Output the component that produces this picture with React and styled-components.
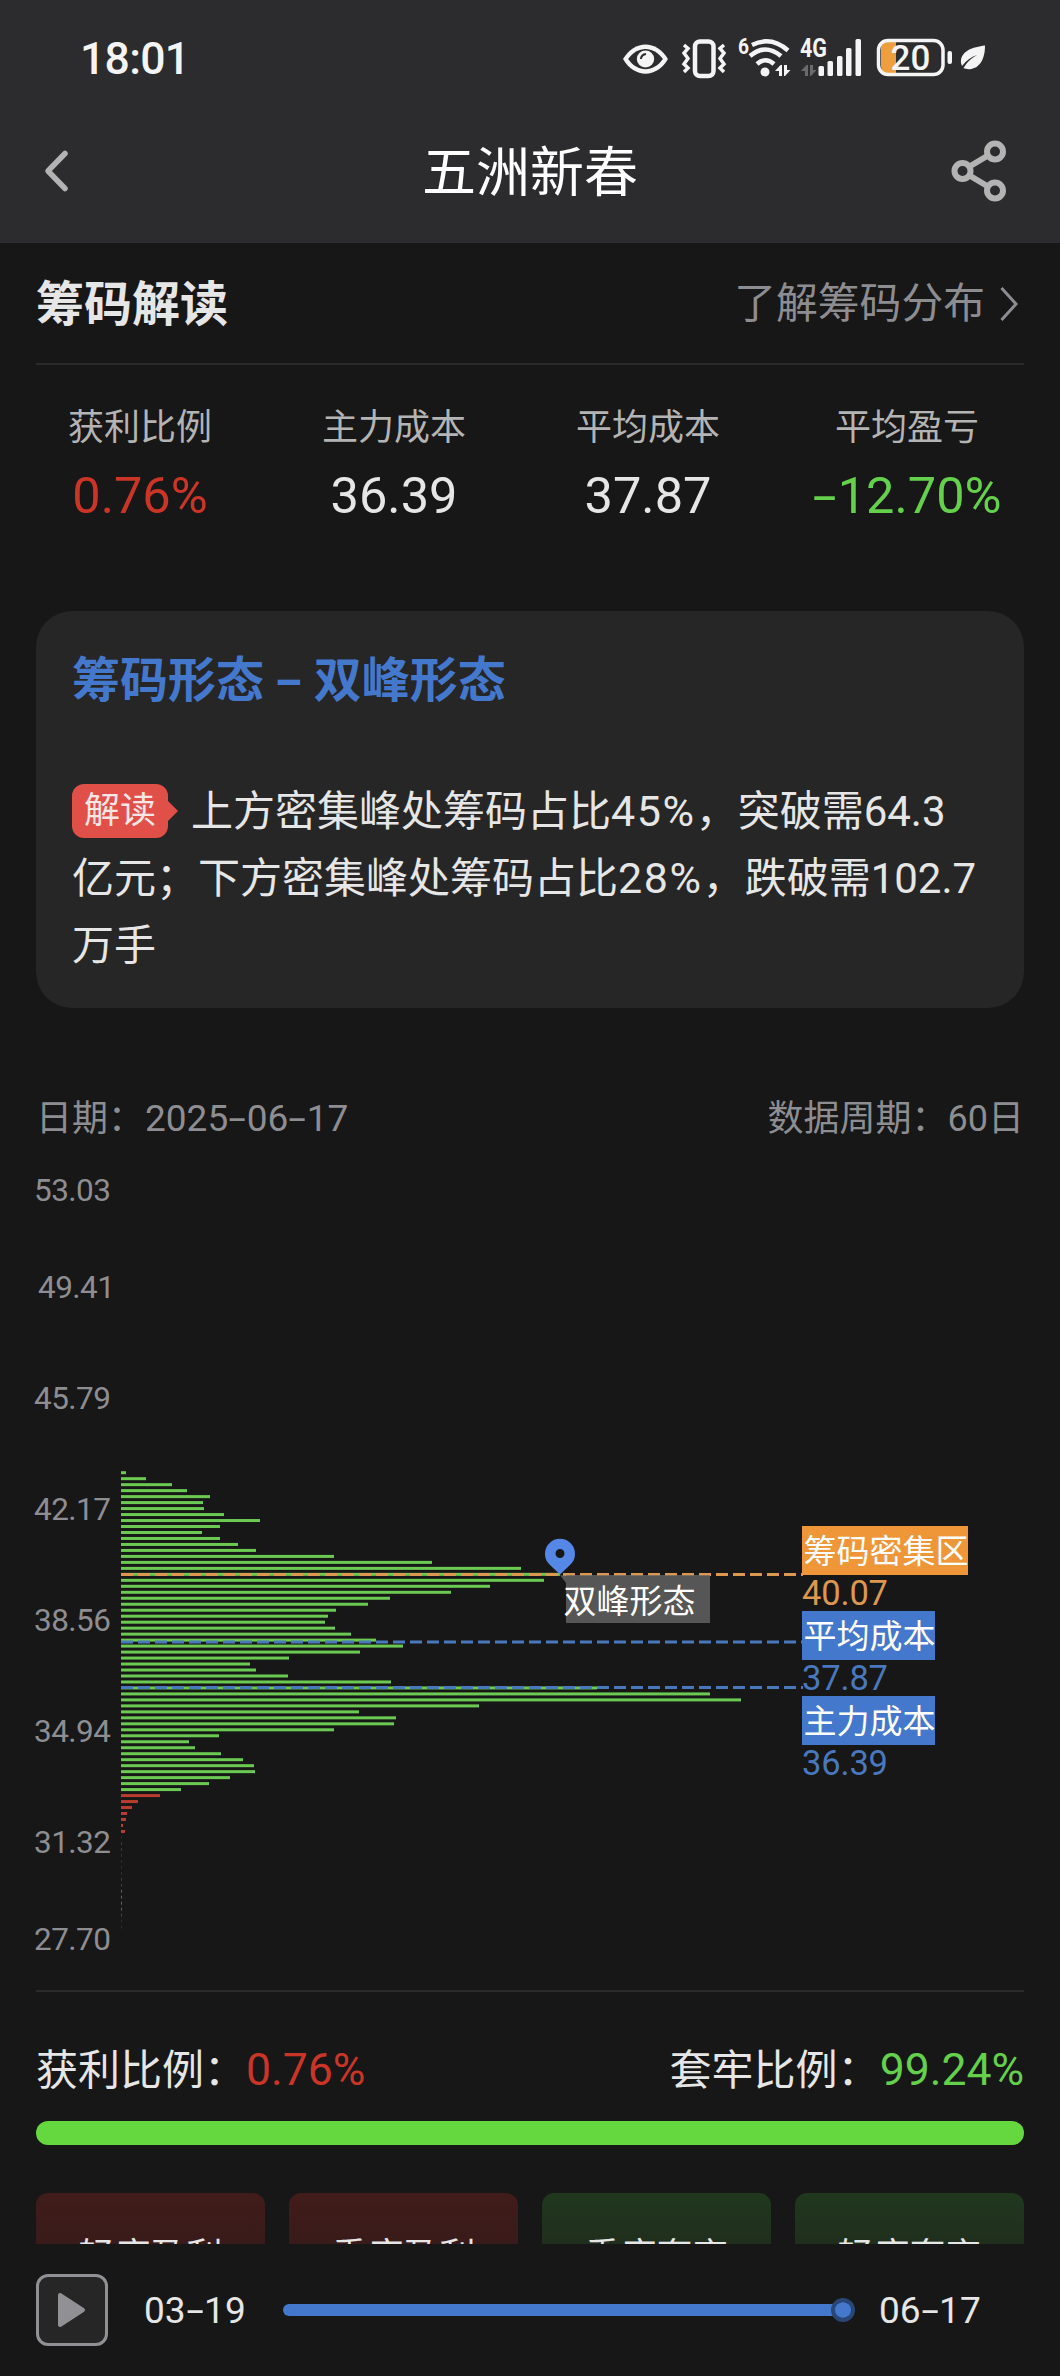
import React from 'react';
import styled, { createGlobalStyle } from 'styled-components';

const GlobalStyle = createGlobalStyle`
  body {
    margin: 0;
    background: #171717;
    font-family: Roboto, 'Noto Sans CJK SC', sans-serif;
  }
`;

// Page shell
const Screen = styled.div`
  display: flex;
  flex-direction: column;
  width: 1060px;
  height: 2376px;
  overflow: hidden;
  background: #171717;
  color: #e6e6e6;
`;

const Header = styled.header`
  height: 243px;
  flex: none;
  background: #2c2c2e;
`;

const StatusBar = styled.div`
  display: flex;
  align-items: center;
  justify-content: space-between;
  height: 116px;
  padding: 0 74px 0 80px;
  color: #f4f4f4;
`;

const Clock = styled.span`
  padding-top: 1px;
  font-size: 44.5px;
  font-weight: 500;
  letter-spacing: -0.7px;
  line-height: 52px;
`;

const StatusIcons = styled.div`
  display: flex;
  align-items: center;
`;

const StatusIcon = styled.svg`
  display: block;
  overflow: visible;
  width: ${(props) => props.$width}px;
  height: 44px;
  margin-left: ${(props) => props.$gap || 0}px;
  font-weight: 700;
`;

const NavBar = styled.div`
  display: flex;
  align-items: center;
  justify-content: space-between;
  height: 110px;
  padding: 0 50px 0 40px;
`;

const NavSide = styled.div`
  display: flex;
  width: 100px;
  justify-content: ${(props) => (props.$end ? 'flex-end' : 'flex-start')};
`;

const NavTitle = styled.h1`
  margin: 0 0 0 10px;
  padding-top: 5px;
  color: #fff;
  font-size: 54px;
  font-weight: 400;
  line-height: 64px;
`;

const Body = styled.main`
  display: flex;
  flex-direction: column;
  height: 2001px;
  flex: none;
  padding: 0 36px;
  overflow: hidden;
`;

// Section heading
const SectionHead = styled.div`
  display: flex;
  flex: none;
  align-items: center;
  justify-content: space-between;
  box-sizing: border-box;
  height: 122px;
  padding-top: 2px;
  border-bottom: 2px solid #2b2b2d;
`;

const SectionTitle = styled.h2`
  margin: 0;
  padding-top: 1px;
  font-size: 48px;
  font-weight: 700;
  line-height: 60px;
`;

const MoreLink = styled.a`
  display: flex;
  align-items: center;
  gap: 15px;
  padding-right: 6px;
  color: #8d8c91;
  font-size: 41.8px;
  line-height: 50px;
`;

// Key figures
const Stats = styled.div`
  display: grid;
  flex: none;
  grid-template-columns: 254px 254px 254px 264px;
  height: 246px;
  margin: 0 -15px 0 -23px;
  box-sizing: border-box;
  padding-top: 36px;
`;

const Stat = styled.div`
  display: flex;
  flex-direction: column;
  align-items: center;
`;

const StatLabel = styled.span`
  color: #b4b4b4;
  font-size: 36px;
  line-height: 54px;
`;

const StatValue = styled.span`
  margin-top: 11px;
  color: ${(props) => props.$color || '#e6e6e6'};
  font-size: 50.5px;
  line-height: 60px;
`;

const DashBox = styled.span`
  display: inline-block;
  width: 0.5em;
  text-align: center;
  transform: scaleX(1.7);
`;

// Interpretation card
const Card = styled.section`
  flex: none;
  box-sizing: border-box;
  height: 397px;
  padding: 40px 36px 0;
  border-radius: 36px;
  background: #262626;
`;

const CardTitle = styled.h3`
  margin: 0;
  color: #4478cc;
  font-size: 48px;
  font-weight: 700;
  line-height: 60px;
  word-spacing: 1px;
`;

const CardText = styled.p`
  margin: 67px -20px 0 0;
  font-size: 42px;
  line-height: 67px;
  white-space: nowrap;
`;

const Percent = styled.span`
  font-size: 43px;
  letter-spacing: 1.6px;
`;

const Badge = styled.span`
  position: relative;
  display: inline-block;
  width: 96px;
  height: 54px;
  margin-right: 23px;
  border-radius: 12px;
  background: #e05049;
  color: #fbe6e4;
  font-size: 36px;
  line-height: 54px;
  text-align: center;
  vertical-align: 3px;

  &::after {
    content: '';
    position: absolute;
    left: 95px;
    top: 16px;
    border: 11px solid transparent;
    border-left-color: #e05049;
    border-right-width: 0;
  }
`;

// Chart area
const MetaRow = styled.div`
  display: flex;
  flex: none;
  justify-content: space-between;
  margin-top: 86px;
  margin-bottom: -1px;
  color: #8e8d92;
  font-size: 36px;
  line-height: 50px;
`;

const MetaDate = styled.span`
  font-size: 37px;
  margin-left: 1px;
`;

const ChartSvg = styled.svg`
  display: block;
  flex: none;
  width: 1060px;
  height: 847px;
  margin-left: -36px;
`;

const Divider = styled.div`
  flex: none;
  height: 2px;
  background: #2b2b2d;
`;

// Profit / trapped ratio
const RatioRow = styled.div`
  display: flex;
  flex: none;
  justify-content: space-between;
  height: 54px;
  margin-top: 51px;
  font-size: 42px;
  line-height: 54px;
`;

const RatioValue = styled.span`
  color: ${(props) => props.$color};
  font-size: 44.5px;
`;

const RatioBar = styled.div`
  flex: none;
  height: 24px;
  margin-top: 24px;
  border-radius: 12px;
  background: #64d83e;
`;

const Tiles = styled.div`
  display: grid;
  flex: none;
  grid-template-columns: repeat(4, 1fr);
  gap: 24px;
  margin-top: 48px;
`;

const Tile = styled.div`
  height: 130px;
  box-sizing: border-box;
  padding-top: 37px;
  border-radius: 12px;
  background: linear-gradient(${(props) => (props.$up ? '#411c1a, #331a1a 80px' : '#20381e, #20291d 80px')});
  font-size: 36px;
  line-height: 54px;
  text-align: center;
`;

// Timeline player
const Player = styled.footer`
  display: flex;
  flex: none;
  align-items: center;
  height: 132px;
  padding: 0 36px;
  font-size: 37px;
  line-height: 50px;
`;

const PlayButton = styled.button`
  display: flex;
  align-items: center;
  justify-content: center;
  box-sizing: border-box;
  width: 72px;
  height: 72px;
  margin: 0 36px 0 0;
  padding: 0;
  border: 3px solid #919095;
  border-radius: 12px;
  background: #262626;
`;

const PlayerDate = styled.span`
  width: 102px;
  padding-top: 2px;
`;

const Track = styled.div`
  position: relative;
  width: 570px;
  height: 12px;
  margin: 0 26px 0 37px;
  border-radius: 6px;
  background: #4478cc;
`;

const Thumb = styled.div`
  position: absolute;
  right: -2px;
  top: -6px;
  box-sizing: border-box;
  width: 24px;
  height: 24px;
  border: 4px solid #294776;
  border-radius: 50%;
  background: #4478cc;
  background-clip: padding-box;
`;

const RED = '#cb3527';
const GREEN = '#65d04b';

const stats = [
    { label: '获利比例', value: '0.76%', color: RED },
    { label: '主力成本', value: '36.39' },
    { label: '平均成本', value: '37.87' },
    { label: '平均盈亏', value: '-12.70%', color: GREEN },
];

const tiles = [
    { label: '轻度盈利', up: true },
    { label: '重度盈利', up: true },
    { label: '重度套牢', up: false },
    { label: '轻度套牢', up: false },
];

// Chip volume per price level, from the highest price down
const trapped = [
    5, 25, 51, 66, 89, 82, 83, 103, 139, 99, 81, 99, 117, 135, 213, 311, 400, 439, 423, 369, 330, 269, 247, 215, 207,
    204, 214, 230, 255, 282, 239, 168, 129, 135, 167, 270, 476, 589, 620, 358, 238, 275, 273, 213, 98, 68, 74, 100,
    122, 133, 134, 109, 88, 60,
];
const profitable = [
    39, 17, 11, 6, 5, 2, 4, 0.2, 0.5, 0.5, 0.3, 0.3, 0.3, 0.3, 0.5, 0.5, 1, 1, 1, 1, 0.6, 0.3, 0.3,
];

const axis = [
    { label: '53.03', x: 35, y: 58 },
    { label: '49.41', x: 39, y: 155 },
    { label: '45.79', x: 35, y: 266 },
    { label: '42.17', x: 35, y: 377 },
    { label: '38.56', x: 35, y: 488 },
    { label: '34.94', x: 35, y: 599 },
    { label: '31.32', x: 35, y: 710 },
    { label: '27.70', x: 35, y: 807 },
];

const marks = [
    { label: '筹码密集区', value: '40.07', line: 431.5, top: 383, width: 166, fill: '#ee9638', color: '#dc9850' },
    { label: '平均成本', value: '37.87', line: 499, top: 468, width: 133, fill: '#4478cc', color: '#4a78bd' },
    { label: '主力成本', value: '36.39', line: 544.5, top: 553, width: 133, fill: '#4478cc', color: '#4a78bd' },
];

// Draws hyphens at the same width as the figures around them
const Figures = ({ text }) =>
    text.split(/(-)/).map((part, index) => (part === '-' ? <DashBox key={index}>-</DashBox> : part));

const UpDown = ({ x, fill = '#f4f4f4' }) => (
    <path transform={`translate(${x} 29)`} d="M0 6 L5.5 0 H7 V11 H4 V6 Z M9 0 H12 V5 H15.5 L10 11 H9 Z" fill={fill} />
);

const StatusGlyphs = () => (
    <StatusIcons>
        <StatusIcon $width={47} viewBox="0 0 46 44" preserveAspectRatio="none">
            <path d="M1 23 C12 3.5 34 3.5 45 23 C34 42.500 12 42.500 1 23 Z" fill="#f4f4f4" />
            <path d="M6 23 C15 9.500 31 9.500 40 23 C31 36.500 15 36.500 6 23 Z" fill="#2c2c2e" />
            <circle cx="23" cy="23" r="8.500" fill="#f4f4f4" />
            <path d="M18.500 23 Q19 18.500 23.500 18" stroke="#2c2c2e" strokeWidth="2" fill="none" />
        </StatusIcon>
        <StatusIcon $width={46} $gap={12} viewBox="0 0 46 44" fill="none" stroke="#f4f4f4">
            <rect x="14" y="5.500" width="18.500" height="34.500" rx="5" strokeWidth="4.500" />
            <path d="M3 9 L7 12.500 L3 17 L7 22.500 L3 28 L7 32 L3 36" strokeWidth="3.500" />
            <path d="M43 9 L39 12.500 L43 17 L39 22.500 L43 28 L39 32 L43 36" strokeWidth="3.500" />
        </StatusIcon>
        <StatusIcon $width={54} $gap={11} viewBox="0 0 54 44">
            <text x="0" y="18" fontSize="22" textLength="11" lengthAdjust="spacingAndGlyphs" fill="#f4f4f4">6</text>
            <g fill="none" stroke="#f4f4f4" strokeWidth="4.500">
                <path d="M14 9 Q33 -0.500 50 14.500" />
                <path d="M12 20 Q27 7 43 20" />
                <path d="M19 28 Q27.500 20.500 36 28" />
            </g>
            <circle cx="27" cy="36" r="4.500" fill="#f4f4f4" />
            <UpDown x={37} />
        </StatusIcon>
        <StatusIcon $width={62} $gap={8} viewBox="0 0 62 44" fill="#f4f4f4">
            <text x="0" y="21" fontSize="25" textLength="27" lengthAdjust="spacingAndGlyphs">4G</text>
            <UpDown x={1} fill="#6a6a6c" />
            <rect x="18.500" y="30" width="5.500" height="10" rx="1.500" />
            <rect x="27.500" y="25" width="5.500" height="15" rx="1.500" />
            <rect x="37" y="20" width="5.500" height="20" rx="1.500" />
            <rect x="46" y="12" width="5.500" height="28" rx="1.500" />
            <rect x="55.500" y="3" width="5.500" height="37" rx="1.500" />
        </StatusIcon>
        <StatusIcon $width={76} $gap={15} viewBox="0 0 76 44">
            <path d="M12 5 H19 V38 H12 Q4 38 4 30 V13 Q4 5 12 5 Z" fill="#ee9f3d" />
            <rect x="1.500" y="4.500" width="64.500" height="34" rx="9.500" fill="none" stroke="#f4f4f4" strokeWidth="3.500" />
            <text x="13.500" y="34" fontSize="35" fontWeight="500" textLength="40" fill="#f4f4f4">20</text>
            <rect x="70.500" y="15" width="4.500" height="13" rx="2" fill="#f4f4f4" />
        </StatusIcon>
        <StatusIcon $width={26} $gap={7} viewBox="0 0 26 44">
            <path d="M25 9.500 C13 11 0 15 1 27 L2 30 Q8 22 17 19 Q8 24 3.500 32 C9 35 25 34 25 9.500 Z" fill="#f4f4f4" />
        </StatusIcon>
    </StatusIcons>
);

const ChipChart = () => (
    <ChartSvg viewBox="0 0 1060 847">
        {axis.map((tick) => (
            <text key={tick.label} x={tick.x - 1} y={tick.y} fontSize="31.500" textLength="77" fill="#8e8d92">
                {tick.label}
            </text>
        ))}
        {[...trapped, ...profitable].map((width, index) => (
            <rect
                key={index}
                x="121"
                y={328.2 + index * 5.979}
                width={width}
                height="3"
                fill={index < trapped.length ? '#6cca52' : '#b83c30'}
            />
        ))}
        {marks.map((mark) => (
            <line
                key={mark.label}
                x1="121"
                x2="803"
                y1={mark.line}
                y2={mark.line}
                stroke={mark.color}
                strokeWidth="3"
                strokeDasharray="12 5"
            />
        ))}
        <path d="M560 432 L566 433 V440 Z" fill="#585858" />
        <rect x="566" y="432" width="144" height="48" fill="#666" fillOpacity="0.8" />
        <text x="563.500" y="470" fontSize="33" textLength="132" fill="#fff">双峰形态</text>
        <path
            fillRule="evenodd"
            d="M560 431.500 L549.500 421.500 A15 15 0 1 1 570.500 421.500 Z M564.500 410.500 A4.500 4.500 0 1 0 555.500 410.500 A4.500 4.500 0 1 0 564.500 410.500 Z"
            fill="#5588e6"
        />
        {marks.map((mark) => (
            <g key={mark.label}>
                <rect x="802" y={mark.top} width={mark.width} height="49" fill={mark.fill} />
                <text x="803.500" y={mark.top + 37} fontSize="33" fill="#fff">{mark.label}</text>
                <text x="802" y={mark.top + 78.5} fontSize="34.500" textLength="86" fill={mark.color}>{mark.value}</text>
            </g>
        ))}
    </ChartSvg>
);

const App = () => (
    <Screen>
        <GlobalStyle />
        <Header>
            <StatusBar>
                <Clock>18:01</Clock>
                <StatusGlyphs />
            </StatusBar>
            <NavBar>
                <NavSide>
                    <svg width="32" height="48" viewBox="0 0 32 48" fill="none" stroke="#b3b3b3" strokeWidth="5.500" strokeLinecap="round" strokeLinejoin="round">
                        <path d="M25 6.500 L8 24 L25 41.500" />
                    </svg>
                </NavSide>
                <NavTitle>五洲新春</NavTitle>
                <NavSide $end>
                    <svg width="62" height="64" viewBox="0 0 62 64" fill="none" stroke="#b3b3b3" strokeWidth="6">
                        <circle cx="47" cy="12.500" r="8" />
                        <circle cx="14.500" cy="32" r="8" />
                        <circle cx="47" cy="51.500" r="8" />
                        <path d="M21.500 27.500 L40 16.500 M21.500 36.500 L40 47.500" />
                    </svg>
                </NavSide>
            </NavBar>
        </Header>

        <Body>
            <SectionHead>
                <SectionTitle>筹码解读</SectionTitle>
                <MoreLink>
                    了解筹码分布
                    <svg width="18" height="36" viewBox="0 0 18 36" fill="none" stroke="#8d8c91" strokeWidth="3">
                        <path d="M1.500 2 L16 18 L1.500 34" />
                    </svg>
                </MoreLink>
            </SectionHead>

            <Stats>
                {stats.map((stat) => (
                    <Stat key={stat.label}>
                        <StatLabel>{stat.label}</StatLabel>
                        <StatValue $color={stat.color}>
                            <Figures text={stat.value} />
                        </StatValue>
                    </Stat>
                ))}
            </Stats>

            <Card>
                <CardTitle>
                    筹码形态 <Figures text="-" /> 双峰形态
                </CardTitle>
                <CardText>
                    <Badge>解读</Badge>上方密集峰处筹码占比<Percent>45%</Percent>，突破需64.3
                    <br />
                    亿元；下方密集峰处筹码占比<Percent>28%</Percent>，跌破需102.7
                    <br />
                    万手
                </CardText>
            </Card>

            <MetaRow>
                <span>
                    日期：
                    <MetaDate>
                        <Figures text="2025-06-17" />
                    </MetaDate>
                </span>
                <span>数据周期：60日</span>
            </MetaRow>
            <ChipChart />
            <Divider />

            <RatioRow>
                <span>
                    获利比例：<RatioValue $color={RED}>0.76%</RatioValue>
                </span>
                <span>
                    套牢比例：<RatioValue $color={GREEN}>99.24%</RatioValue>
                </span>
            </RatioRow>
            <RatioBar />
            <Tiles>
                {tiles.map((tile) => (
                    <Tile key={tile.label} $up={tile.up}>
                        {tile.label}
                    </Tile>
                ))}
            </Tiles>
        </Body>

        <Player>
            <PlayButton aria-label="播放">
                <svg width="30" height="36" viewBox="0 0 30 36">
                    <path d="M3 3 L26 18 L3 33 Z" fill="#919095" stroke="#919095" strokeWidth="4" strokeLinejoin="round" />
                </svg>
            </PlayButton>
            <PlayerDate>
                <Figures text="03-19" />
            </PlayerDate>
            <Track>
                <Thumb />
            </Track>
            <PlayerDate>
                <Figures text="06-17" />
            </PlayerDate>
        </Player>
    </Screen>
);

export default App;
